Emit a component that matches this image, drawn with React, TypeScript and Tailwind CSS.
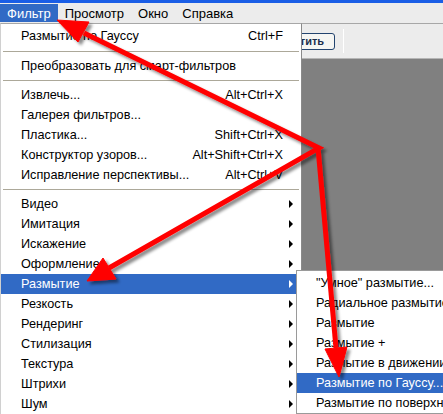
import React from "react";

type Item =
  | { kind: "item"; label: string; shortcut?: string; sub?: boolean; active?: boolean }
  | { kind: "sep"; tall?: boolean };

const filterMenu: Item[] = [
  { kind: "item", label: "Размытие по Гауссу", shortcut: "Ctrl+F" },
  { kind: "sep", tall: true },
  { kind: "item", label: "Преобразовать для смарт-фильтров" },
  { kind: "sep" },
  { kind: "item", label: "Извлечь...", shortcut: "Alt+Ctrl+X" },
  { kind: "item", label: "Галерея фильтров..." },
  { kind: "item", label: "Пластика...", shortcut: "Shift+Ctrl+X" },
  { kind: "item", label: "Конструктор узоров...", shortcut: "Alt+Shift+Ctrl+X" },
  { kind: "item", label: "Исправление перспективы...", shortcut: "Alt+Ctrl+V" },
  { kind: "sep" },
  { kind: "item", label: "Видео", sub: true },
  { kind: "item", label: "Имитация", sub: true },
  { kind: "item", label: "Искажение", sub: true },
  { kind: "item", label: "Оформление", sub: true },
  { kind: "item", label: "Размытие", sub: true, active: true },
  { kind: "item", label: "Резкость", sub: true },
  { kind: "item", label: "Рендеринг", sub: true },
  { kind: "item", label: "Стилизация", sub: true },
  { kind: "item", label: "Текстура", sub: true },
  { kind: "item", label: "Штрихи", sub: true },
  { kind: "item", label: "Шум", sub: true },
];

const blurMenu = [
  { label: "\"Умное\" размытие..." },
  { label: "Радиальное размытие..." },
  { label: "Размытие" },
  { label: "Размытие +" },
  { label: "Размытие в движении..." },
  { label: "Размытие по Гауссу...", active: true },
  { label: "Размытие по поверхности..." },
];

const MenuRow = ({ item }: { item: Item }) => {
  if (item.kind === "sep") {
    return (
      <div className={`flex items-center px-[2px] ${item.tall ? "h-[10px]" : "h-[9px]"}`}>
        <div className="h-px w-full bg-[#aca899]" />
      </div>
    );
  }
  return (
    <div
      className={`flex h-5 items-center pl-5 pr-2 whitespace-nowrap ${
        item.active ? "bg-[#316ac5] text-white" : "text-black"
      }`}
    >
      <span className="flex-1">{item.label}</span>
      {item.shortcut && <span>{item.shortcut}</span>}
      <span className="flex w-[10px] justify-end">
        {item.sub && (
          <span
            className={`h-0 w-0 border-y-[4px] border-l-[4px] border-y-transparent ${
              item.active ? "border-l-white" : "border-l-black"
            }`}
          />
        )}
      </span>
    </div>
  );
};

// Red annotation arrows drawn over the screenshot
const Arrows = () => (
  <svg className="pointer-events-none absolute inset-0" width={443} height={414} viewBox="0 0 443 414">
    <defs>
      <filter id="sh" x="-20%" y="-20%" width="140%" height="140%">
        <feDropShadow dx="3" dy="3" stdDeviation="1.6" floodColor="#000" floodOpacity="0.45" />
      </filter>
    </defs>
    <g filter="url(#sh)" fill="#ff0000" stroke="#ff0000">
      <path d="M84 33 L319 148 L109 268" fill="none" strokeWidth={5} strokeLinejoin="miter" />
      <path d="M318 148 L336 348" fill="none" strokeWidth={5} />
      <polygon points="57,20 78,42 89,22" strokeWidth={1} />
      <polygon points="87,281 116,279 103,258" strokeWidth={1} />
      <polygon points="339,377 347,347 325,349" strokeWidth={1} />
    </g>
  </svg>
);

export default function App() {
  return (
    <div
      className="relative flex h-[414px] w-[443px] flex-col overflow-hidden bg-[#ececec] text-[12.7px] leading-none"
      style={{ fontFamily: '"Liberation Sans", Arial, sans-serif' }}
    >
      <div className="h-[3px] bg-[#1a5ee6]" />
      {/* Menu bar */}
      <div className="flex h-5 items-stretch bg-[#ececec] py-px text-[13px]">
        <div className="flex items-center bg-[#316ac5] px-[7px] text-white">Фильтр</div>
        <div className="flex items-center px-[7px]">Просмотр</div>
        <div className="flex items-center px-[7px]">Окно</div>
        <div className="flex items-center px-[7px]">Справка</div>
      </div>

      {/* Workspace */}
      <div className="flex flex-1 flex-col border-t border-[#a7a7a7]">
        <div className="flex h-[34px] items-center pl-[261px]">
          <button className="h-[17px] w-[74px] rounded-[3px] border border-[#23446f] bg-[#f6f6f3] text-center text-[11px] font-bold text-[#1c2f4d]">
            Очистить
          </button>
          <div className="ml-2 h-6 w-px border-r border-white bg-[#a9a9a9]" />
        </div>
        <div className="flex-1 border-t border-[#b5b5b5] bg-[#808080]" />
      </div>

      {/* Filter dropdown */}
      <div className="absolute left-0 top-[23px] w-[302px] border border-t-[#a7a7a7] border-r-[#8a8a8a] border-l-[#d0d0d0] border-b-[#8a8a8a] bg-white pt-[2px]">
        {filterMenu.map((item, i) => (
          <MenuRow key={i} item={item} />
        ))}
      </div>

      {/* Blur submenu */}
      <div className="absolute left-[296px] top-[270px] w-[160px] border border-[#9a9a9a] bg-white pt-[2px]">
        {blurMenu.map((item, i) => (
          <div
            key={i}
            className={`flex h-5 items-center whitespace-nowrap pl-[19px] ${
              item.active ? "bg-[#316ac5] text-white" : "text-black"
            }`}
          >
            {item.label}
          </div>
        ))}
      </div>

      <Arrows />
    </div>
  );
}
